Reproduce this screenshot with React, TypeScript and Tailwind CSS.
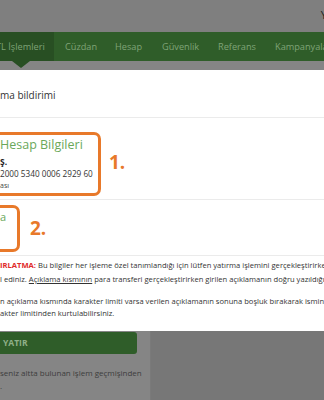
import React from "react";

export default function App() {
  const font = { fontFamily: '"Open Sans", "Noto Sans", sans-serif' };
  return (
    <div className="w-[324px] h-[400px] overflow-hidden bg-[#7f7f7f] flex flex-col" style={font}>
      {/* top bar */}
      <div className="h-[32px] flex items-center justify-end pr-0 shrink-0">
        <span className="text-[11px] text-[#222] mr-[-3px] pb-[1px]">Y</span>
      </div>
      {/* nav */}
      <div className="h-[29px] bg-[#2f5d29] flex items-center shrink-0 text-[9.2px] text-[#7fa377] whitespace-nowrap">
        <div className="h-full w-[54px] bg-[#284f23] flex items-center shrink-0">
          <span className="ml-[-4px]">TL İşlemleri</span>
        </div>
        <div className="w-[61px] pl-[11px] shrink-0">Cüzdan</div>
        <div className="w-[47px] shrink-0">Hesap</div>
        <div className="w-[56px] shrink-0">Güvenlik</div>
        <div className="w-[57px] shrink-0">Referans</div>
        <div className="shrink-0">Kampanyalar</div>
      </div>
      {/* strip */}
      <div className="h-[9px] bg-[#858585] shrink-0 relative">
        <div className="absolute left-[12px] top-0 w-0 h-0 border-l-[9px] border-r-[9px] border-t-[7px] border-l-transparent border-r-transparent border-t-[#284f23]" />
      </div>
      {/* modal */}
      <div className="h-[261px] bg-white shrink-0 flex flex-col">
        <div className="h-[48px] border-b border-[#ebebeb] flex items-center text-[10px] text-[#333] shrink-0">
          <span className="pt-[4px]">ma bildirimi</span>
        </div>
        <div className="flex items-start h-[82px] border-b border-[#ebebeb] whitespace-nowrap shrink-0">
          <div className="ml-[-10px] mt-[14px] w-[111px] h-[64px] border-[3px] border-[#e8792a] rounded-[7px] pl-[7px] flex flex-col shrink-0">
            <span className="text-[12.5px] leading-[19px] text-[#6aa85a]">Hesap Bilgileri</span>
            <span className="text-[8.5px] leading-[12px] font-bold text-[#222] mt-[2px]">Ş.</span>
            <span className="text-[8.2px] leading-[12px] text-[#333]">2000 5340 0006 2929 60</span>
            <span className="text-[7px] leading-[12px] text-[#444]">ası</span>
          </div>
          <span className="ml-[8px] mt-[31px] text-[19px] leading-[26px] font-bold text-[#e8792a]">1.</span>
        </div>
        <div className="flex items-start h-[56px] border-b border-[#ebebeb] shrink-0">
          <div className="ml-[-10px] mt-[5px] w-[30px] h-[47px] border-[3px] border-[#e8792a] rounded-[7px] pl-[7px] flex flex-col shrink-0">
            <span className="text-[11px] leading-[14px] text-[#6aa85a] mt-[2px]">a</span>
          </div>
          <span className="ml-[10px] mt-[15px] text-[19px] leading-[26px] font-bold text-[#e8792a]">2.</span>
        </div>
        <div className="text-[7.6px] leading-[14px] text-[#333] whitespace-nowrap pt-[2px]">
          <div>
            <span className="font-bold text-[#e02a2a]">IRLATMA:</span> Bu bilgiler her işleme özel tanımlandığı için lütfen yatırma işlemini gerçekleştirirken
          </div>
          <div>
            l ediniz. <span className="underline">Açıklama kısmının</span> para transferi gerçekleştirirken girilen açıklamanın doğru yazıldığından
          </div>
          <div className="mt-[8px]">n açıklama kısmında karakter limiti varsa verilen açıklamanın sonuna boşluk bırakarak isminizi</div>
          <div className="leading-[10px]">akter limitinden kurtulabilirsiniz.</div>
        </div>
      </div>
      {/* bottom */}
      <div className="flex-1 flex">
        <div className="w-[151px] bg-[#858585] flex flex-col border-r border-[#7a7a7a]">
          <div className="w-[137px] h-[22px] mt-[1px] bg-[#2f5d29] rounded-r-[3px] flex items-center">
            <span className="ml-[3px] text-[8.5px] font-bold text-[#8fb088]">YATIR</span>
          </div>
          <div className="text-[8px] leading-[13px] text-[#3d3d3d] mt-[12px] whitespace-nowrap">seniz altta bulunan işlem geçmişinden</div>
          <div className="text-[8px] leading-[13px] text-[#3d3d3d]">.</div>
        </div>
        <div className="flex-1 bg-[#777777]" />
      </div>
    </div>
  );
}
